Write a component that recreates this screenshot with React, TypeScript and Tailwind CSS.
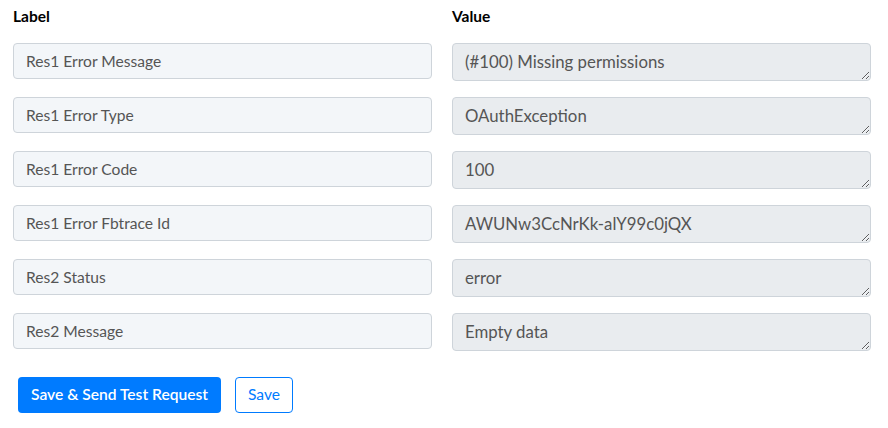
import React from "react";

const rows = [
  ["Res1 Error Message", "(#100) Missing permissions"],
  ["Res1 Error Type", "OAuthException"],
  ["Res1 Error Code", "100"],
  ["Res1 Error Fbtrace Id", "AWUNw3CcNrKk-alY99c0jQX"],
  ["Res2 Status", "error"],
  ["Res2 Message", "Empty data"],
];

export default function App() {
  return (
    <div className="w-[888px] h-[428px] bg-white pl-[13px] pt-[6px] font-['Lato',sans-serif]">
      <div className="grid grid-cols-[419px_419px] gap-x-[20px]">
        <div className="text-[15.5px] font-bold text-black h-[21px] leading-[21px]">Label</div>
        <div className="text-[15.5px] font-bold text-black h-[21px] leading-[21px]">Value</div>
      </div>
      <div className="mt-[16px] flex flex-col gap-[16px]">
        {rows.map(([l, v]) => (
          <div key={l} className="grid grid-cols-[419px_419px] gap-x-[20px] items-start">
            <input
              readOnly
              value={l}
              className="h-[36px] w-full rounded-[4px] border border-[#ced4da] bg-[#f3f6f9] px-[12px] text-[15.6px] text-[#555] outline-none"
            />
            <textarea
              readOnly
              value={v}
              rows={1}
              className="h-[38px] w-full rounded-[4px] border border-[#ced4da] bg-[#e9ecef] px-[12px] py-[6px] text-[16.8px] leading-[24px] text-[#555] outline-none overflow-hidden"
            />
          </div>
        ))}
      </div>
      <div className="mt-[26px] ml-[5px] flex gap-[14px]">
        <button className="h-[36px] px-[13px] rounded-[4px] bg-[#007bff] text-white text-[15.6px] font-semibold">
          Save &amp; Send Test Request
        </button>
        <button className="h-[36px] px-[12px] rounded-[4px] border border-[#007bff] bg-white text-[#007bff] text-[15.6px]">
          Save
        </button>
      </div>
    </div>
  );
}
